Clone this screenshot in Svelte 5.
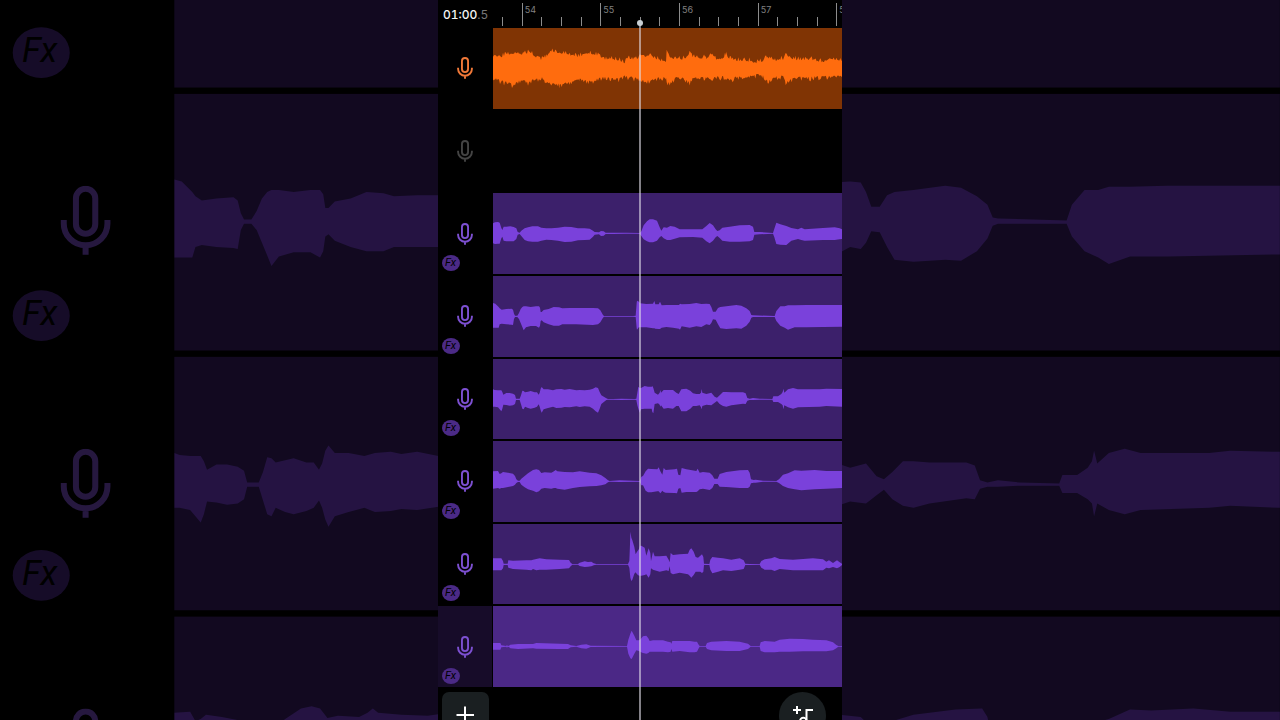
<script>
  // Waveform points: x, height above the centre line, height below it (clip is 1047 x 242 units).
  const guitar = [
    0,42,34, 15,41,38, 30,40,44, 45,48,46, 60,50,54, 72,52,44, 90,46,42, 105,52,46, 120,46,40, 135,34,36, 150,30,32,
    160,38,46, 175,52,52, 187,56,50, 200,50,54, 215,50,50, 235,42,46, 260,40,38, 280,50,42, 300,48,44, 315,42,36,
    330,30,32, 350,34,34, 380,28,36, 395,22,28, 405,36,30, 420,32,32, 441,38,38, 470,44,42, 500,28,30, 519,26,34,
    521,52,42, 530,40,48, 550,32,32, 575,34,36, 590,50,46, 600,38,34, 640,34,32, 652,44,38, 670,32,30, 690,34,30,
    700,46,36, 710,32,40, 730,28,30, 760,28,32, 790,22,24, 810,24,24, 816,42,30, 824,38,42, 840,30,34, 850,28,28,
    870,32,28, 878,50,46, 890,38,40, 910,30,32, 950,32,32, 990,24,28, 1010,36,30, 1030,28,28, 1047,28,26
  ];
  const lead = [
    0,30,30, 6,33,32, 15,34,31, 20,32,31, 25,16,15, 28,10,10, 32,20,22, 40,20,24, 52,21,24, 62,19,24, 70,15,17, 74,4,4,
    80,2,2, 85,8,8, 95,15,20, 105,18,24, 118,21,25, 135,21,25, 145,17,22, 160,15,19, 175,15,20, 195,17,22, 215,20,26,
    235,19,25, 255,15,21, 275,15,20, 290,14,19, 300,8,10, 305,4,4, 318,3,3, 324,7,8, 332,6,7, 338,2,2, 360,2,2, 400,2,1,
    440,1,1, 445,6,8, 452,24,18, 462,36,24, 470,42,27, 480,42,27, 492,38,22, 500,18,12, 505,8,8, 512,18,15, 522,17,20,
    532,22,20, 545,20,16, 560,12,12, 600,12,11, 628,12,13, 640,22,24, 650,31,30, 660,24,22, 668,12,12, 673,7,8, 680,9,14,
    688,17,22, 710,20,25, 740,24,25, 770,25,24, 780,20,20, 784,4,4, 800,4,3, 840,1,1, 844,14,12, 850,32,32, 862,27,34,
    880,22,35, 895,16,22, 915,12,17, 925,17,20, 935,12,22, 990,16,20, 1025,18,20, 1040,15,18, 1047,12,17
  ];
  const double = [
    0,40,34, 7,38,34, 17,28,34, 20,24,24, 26,20,22, 40,22,24, 56,23,25, 60,20,26, 63,8,8, 66,2,2, 73,2,2, 78,10,8,
    83,22,20, 88,28,32, 92,30,42, 99,30,33, 113,28,29, 129,30,29, 138,30,34, 141,26,28, 143,13,14, 146,13,12, 152,19,18,
    167,22,24, 182,28,28, 198,27,28, 208,24,24, 230,25,24, 249,25,24, 300,25,26, 315,24,24, 322,18,18, 330,4,4, 333,1,1,
    420,1,1, 428,2,2, 431,40,36, 432,47,40, 438,44,32, 441,39,33, 460,37,33, 480,38,36, 484,46,36, 487,36,37, 497,36,38,
    501,44,38, 506,33,34, 520,34,32, 540,34,34, 558,34,37, 561,38,40, 566,36,30, 590,37,34, 610,40,30, 625,37,32,
    640,38,24, 650,37,26, 655,28,20, 660,14,9, 668,14,10, 675,25,24, 682,28,36, 700,30,38, 730,34,36, 745,32,37,
    760,24,28, 770,16,16, 775,4,4, 780,3,2, 845,1,2, 850,16,14, 862,30,28, 875,30,34, 885,33,40, 905,33,33, 940,34,33,
    990,34,32, 1047,34,31
  ];
  const highHarmony = [
    0,30,22, 5,28,22, 15,27,24, 20,27,30, 25,27,36, 28,22,28, 31,14,16, 40,19,17, 50,19,19, 60,17,18, 66,13,14, 69,2,2,
    80,2,2, 84,12,15, 88,26,28, 92,25,30, 96,21,22, 105,23,26, 113,25,28, 125,21,25, 132,21,22, 137,14,15, 140,20,22,
    143,32,33, 146,37,40, 152,30,30, 165,30,26, 180,27,22, 190,30,26, 205,31,25, 215,29,23, 230,31,24, 250,27,21,
    260,28,23, 275,27,21, 290,29,22, 300,32,28, 308,36,36, 315,34,40, 320,22,28, 325,12,14, 340,3,2, 345,1,1, 360,1,1,
    385,2,2, 425,1,1, 430,2,2, 433,20,18, 436,38,28, 440,34,40, 444,34,30, 455,40,28, 465,38,28, 476,38,28, 478,40,38,
    481,34,42, 485,20,14, 495,14,12, 500,20,16, 502,28,22, 504,20,18, 512,28,28, 525,28,26, 540,28,28, 550,20,20,
    557,16,20, 565,30,36, 580,32,36, 592,26,28, 600,18,20, 610,16,20, 620,16,18, 624,20,24, 626,31,30, 628,20,20,
    640,16,16, 655,20,18, 665,8,10, 672,5,5, 680,12,14, 690,22,20, 700,22,22, 715,21,18, 750,21,13, 758,18,14, 763,4,4,
    770,2,2, 780,4,2, 800,2,1, 838,1,1, 841,9,8, 855,9,8, 865,16,14, 869,22,18, 871,32,30, 874,20,18, 885,30,24,
    900,34,28, 915,30,24, 980,30,22, 1000,32,20, 1047,31,22
  ];
  const lowHarmony = [
    0,30,22, 15,31,20, 20,22,22, 25,24,20, 30,28,20, 45,26,17, 60,23,14, 66,16,10, 70,6,5, 75,2,2, 80,2,2, 85,8,10,
    95,16,18, 105,24,24, 120,34,28, 130,36,33, 138,34,30, 145,25,22, 155,27,20, 175,26,22, 183,30,20, 188,34,20,
    193,30,22, 215,28,25, 240,27,20, 260,30,17, 290,26,15, 310,24,14, 325,18,12, 337,10,9, 345,3,3, 350,1,1, 380,3,2,
    440,1,1, 445,14,12, 450,16,12, 458,30,28, 465,38,33, 475,37,33, 493,36,30, 497,42,30, 502,30,36, 508,20,28,
    512,40,32, 518,34,34, 545,36,35, 552,38,36, 556,20,22, 562,18,20, 566,40,34, 580,36,32, 610,31,32, 614,38,30,
    620,26,24, 630,28,22, 650,26,26, 658,18,20, 664,8,8, 674,8,8, 680,22,16, 700,28,17, 740,33,20, 765,34,20,
    770,26,16, 774,6,6, 782,4,4, 788,5,4, 810,2,1, 850,1,1, 858,6,5, 870,20,14, 885,24,20, 905,33,24, 925,32,27,
    965,34,24, 1000,31,22, 1047,31,20
  ];
  const adlib = [
    0,18,18, 25,18,18, 30,10,12, 32,2,2, 44,2,2, 46,12,10, 60,11,14, 100,12,16, 115,12,18, 120,14,14, 130,16,18,
    140,18,16, 160,15,16, 200,14,14, 228,13,12, 233,5,6, 238,1,1, 255,1,1, 260,5,5, 275,9,8, 285,7,7, 295,8,6, 302,3,3,
    310,1,1, 405,1,1, 409,10,10, 411,60,30, 412,98,40, 415,80,50, 418,72,46, 424,52,28, 428,30,24, 432,38,30,
    438,46,34, 441,56,34, 445,56,34, 455,50,32, 460,26,30, 467,48,40, 472,34,30, 474,10,12, 480,38,16, 485,24,18,
    500,24,22, 520,26,18, 527,14,20, 530,6,6, 533,34,26, 540,28,30, 560,30,25, 585,32,30, 590,44,34, 595,48,40,
    602,38,32, 608,22,22, 615,20,22, 622,26,22, 627,30,26, 631,22,22, 633,2,2, 649,1,2, 652,14,16, 658,22,27,
    675,20,22, 690,18,18, 715,14,20, 740,18,16, 752,12,14, 757,2,2, 770,1,2, 800,1,1, 805,10,10, 815,15,16, 835,18,16,
    845,22,20, 860,16,14, 900,14,18, 960,18,18, 990,15,18, 1000,8,10, 1008,12,12, 1020,4,8, 1032,12,12, 1040,6,8,
    1047,2,2
  ];
  const whisper = [
    0,10,10, 22,10,10, 25,3,3, 40,1,1, 42,5,4, 44,1,1, 48,2,2, 52,5,6, 75,7,8, 120,7,6, 130,10,7, 200,8,8, 225,7,8,
    233,3,3, 250,1,1, 265,5,6, 280,6,7, 293,2,2, 402,1,1, 406,20,22, 412,38,36, 416,47,38, 424,32,22, 430,18,12,
    438,18,14, 441,20,16, 450,30,20, 460,32,22, 466,24,20, 470,16,16, 480,18,16, 510,18,16, 525,14,18, 533,12,16,
    535,8,8, 538,16,16, 560,16,14, 590,16,18, 605,14,18, 612,14,16, 616,6,8, 620,1,1, 638,1,1, 642,10,8, 655,14,12,
    700,16,14, 740,14,14, 765,8,8, 773,1,1, 800,1,1, 803,12,14, 815,16,18, 845,14,18, 860,20,16, 890,23,16, 930,22,15,
    960,20,15, 1000,18,15, 1020,12,12, 1030,4,6, 1036,1,1, 1047,1,1
  ];

  const CENTRE = 121;

  function outline(data) {
    const top = [];
    const bottom = [];
    for (let i = 0; i < data.length; i += 3) {
      top.push(`${data[i]},${CENTRE - data[i + 1]}`);
      bottom.unshift(`${data[i]},${CENTRE + data[i + 2]}`);
    }
    return [...top, ...bottom].join(' ');
  }

  // Adds fine transients to a smooth envelope, the same ones on every run.
  function roughen(data, depth) {
    const noise = (n) => {
      const v = Math.sin(n * 12.9898) * 43758.5453;
      return v - Math.floor(v);
    };
    const out = [];
    for (let i = 0; i + 3 < data.length; i += 3) {
      const [x0, u0, d0, x1, u1, d1] = data.slice(i, i + 6);
      for (let x = x0; x < x1; x += 3) {
        const t = (x - x0) / (x1 - x0);
        out.push(
          x,
          u0 + (u1 - u0) * t + (noise(x) ** 2 - 0.5) * depth,
          d0 + (d1 - d0) * t + (noise(x + 7000) ** 2 - 0.5) * depth
        );
      }
    }
    return [...out, ...data.slice(-3)];
  }

  const tracks = [
    { name: 'Guitar', tone: 'orange', wave: outline(roughen(guitar, 14)) },
    { name: 'Empty', tone: 'muted' },
    { name: 'Lead', tone: 'purple', fx: true, wave: outline(lead) },
    { name: 'Double', tone: 'purple', fx: true, wave: outline(double) },
    { name: 'High harmony', tone: 'purple', fx: true, wave: outline(highHarmony) },
    { name: 'Low harmony', tone: 'purple', fx: true, wave: outline(lowHarmony) },
    { name: 'Ad-lib', tone: 'purple', fx: true, wave: outline(adlib) },
    { name: 'Whisper', tone: 'purple', fx: true, selected: true, wave: outline(whisper) }
  ];

  // The enlarged backdrop only brings the badges of the first five tracks into view.
  const backdropTracks = tracks.map((track, i) => ({ ...track, fx: track.fx && i < 5 }));

  const bars = ['', '54', '55', '56', '57', '58'];
</script>

{#snippet trackList(list)}
  <div class="tracks">
    {#each list as track}
      <div class="track {track.tone}" class:selected={track.selected}>
        <div class="head">
          <button class="mic" aria-label={track.name}>
            <svg viewBox="0 0 16 22" width="16" height="22" fill="none" stroke="currentColor" stroke-width="1.9">
              <rect x="4.95" y="0.95" width="6.1" height="14.2" rx="3.05" />
              <path d="M1.1 10.8V11.9A6.9 6.9 0 0 0 14.9 11.9V10.8M8 18.8V21.8" />
            </svg>
          </button>
          {#if track.fx}
            <button class="fx">Fx</button>
          {/if}
        </div>
        <div class="clip">
          {#if track.wave}
            <svg viewBox="0 0 1047 242" preserveAspectRatio="none">
              <polygon points={track.wave} />
            </svg>
          {/if}
        </div>
      </div>
    {/each}
  </div>
{/snippet}

<div class="page">
  <div class="studio backdrop" aria-hidden="true" inert>
    <div></div>
    {@render trackList(backdropTracks)}
  </div>

  <main class="studio">
    <header class="top">
      <div class="time">01:00<span>.5</span></div>
      <div class="ruler">
        {#each bars as bar}
          <div class="bar">
            <span class="tick major">{bar}</span>
            <span class="tick"></span>
            <span class="tick"></span>
            <span class="tick"></span>
          </div>
        {/each}
      </div>
    </header>

    {@render trackList(tracks)}

    <footer>
      <button class="add" aria-label="Add track">
        <svg viewBox="0 0 19 19" width="19" height="19" stroke="currentColor" stroke-width="2">
          <path d="M9 0.5V18M0.5 9H18" />
        </svg>
      </button>
      <button class="add-music" aria-label="Add music">
        <svg viewBox="0 0 24 24" width="24" height="24" fill="none" stroke="currentColor" stroke-width="2">
          <path d="M6 2V10M2 6H10M22 6H15.5V17" />
          <circle cx="12.3" cy="17" r="3.2" />
        </svg>
      </button>
    </footer>

    <div class="playhead"></div>
  </main>
</div>

<style>
  :global(body) {
    margin: 0;
    background: #000;
  }

  .page {
    position: relative;
    display: grid;
    justify-content: center;
    height: 100vh;
    overflow: hidden;
    background: #000;
    font-family: Inter, 'Liberation Sans', sans-serif;
  }

  .studio {
    position: relative;
    grid-area: 1 / 1;
    display: grid;
    grid-template-columns: minmax(0, 1fr);
    grid-template-rows: 28px minmax(0, 1fr) 33px;
    width: 404px;
    height: 100vh;
    overflow: hidden;
    background: #000;
  }

  .backdrop {
    transform: scale(3.168);
    opacity: 0.3;
  }

  button {
    padding: 0;
    border: 0;
    background: none;
    color: inherit;
    font: inherit;
    cursor: pointer;
  }

  svg {
    display: block;
  }

  .top,
  .track {
    display: grid;
    grid-template-columns: 55px minmax(0, 1fr);
  }

  .time {
    padding: 3px 0 0 5px;
    color: #f4f4f4;
    font-size: 12px;
    font-variant-numeric: tabular-nums;
    font-weight: 500;
    line-height: 24px;
    white-space: nowrap;
  }

  .time span {
    color: #777;
    font-weight: 400;
  }

  .ruler {
    display: grid;
    grid-template-columns: repeat(6, 1fr);
    margin: 0 -73px 0 -50px;
    clip-path: inset(0 0 0 50px);
  }

  .bar {
    display: grid;
    grid-template-columns: repeat(4, minmax(0, 1fr));
    align-items: end;
    padding-bottom: 2px;
  }

  .tick {
    height: 9px;
    border-left: 1px solid #8c8c8c;
  }

  .tick.major {
    height: 23px;
    padding-left: 2px;
    color: #808080;
    font-size: 9px;
    line-height: 13px;
  }

  .tracks {
    display: grid;
    grid-auto-rows: minmax(0, 1fr);
    gap: 2px;
  }

  .orange {
    --clip: #803404;
    --wave: #ff6c0e;
    --icon: #f07838;
  }

  .muted {
    --clip: #000;
    --icon: #444;
  }

  .purple {
    --clip: #3c206b;
    --wave: #7a41db;
    --icon: #7d50d2;
  }

  .purple.selected {
    --clip: #4b2886;
  }

  .head {
    position: relative;
    display: grid;
    place-items: center;
    margin-right: 1px;
    color: var(--icon);
  }

  .selected .head {
    background: #170c29;
  }

  .fx {
    position: absolute;
    left: 4px;
    bottom: 3px;
    width: 18px;
    height: 16px;
    padding-right: 1px;
    border-radius: 50%;
    background: #4b2a86;
    color: #000;
    font-family: Roboto, sans-serif;
    font-size: 11px;
    font-style: italic;
    font-weight: 400;
    line-height: 16px;
  }

  .clip {
    background: var(--clip);
  }

  .clip svg {
    width: 100%;
    height: 100%;
    fill: var(--wave);
  }

  footer {
    display: flex;
    align-items: start;
    justify-content: space-between;
    padding: 5px 16px 0 4px;
    color: #fff;
  }

  footer button {
    display: grid;
    place-items: center;
    width: 47px;
    height: 47px;
    border-radius: 7px;
    background: #1a1f21;
  }

  footer .add-music {
    border-radius: 50%;
  }

  .playhead {
    position: absolute;
    top: 23px;
    bottom: 0;
    left: calc(50% - 1px);
    width: 2px;
    background: rgb(225 222 232 / 0.58);
  }

  .playhead::before {
    content: '';
    position: absolute;
    top: -3px;
    left: -2px;
    width: 6px;
    height: 6px;
    border-radius: 50%;
    background: #c8cfd4;
  }
</style>
